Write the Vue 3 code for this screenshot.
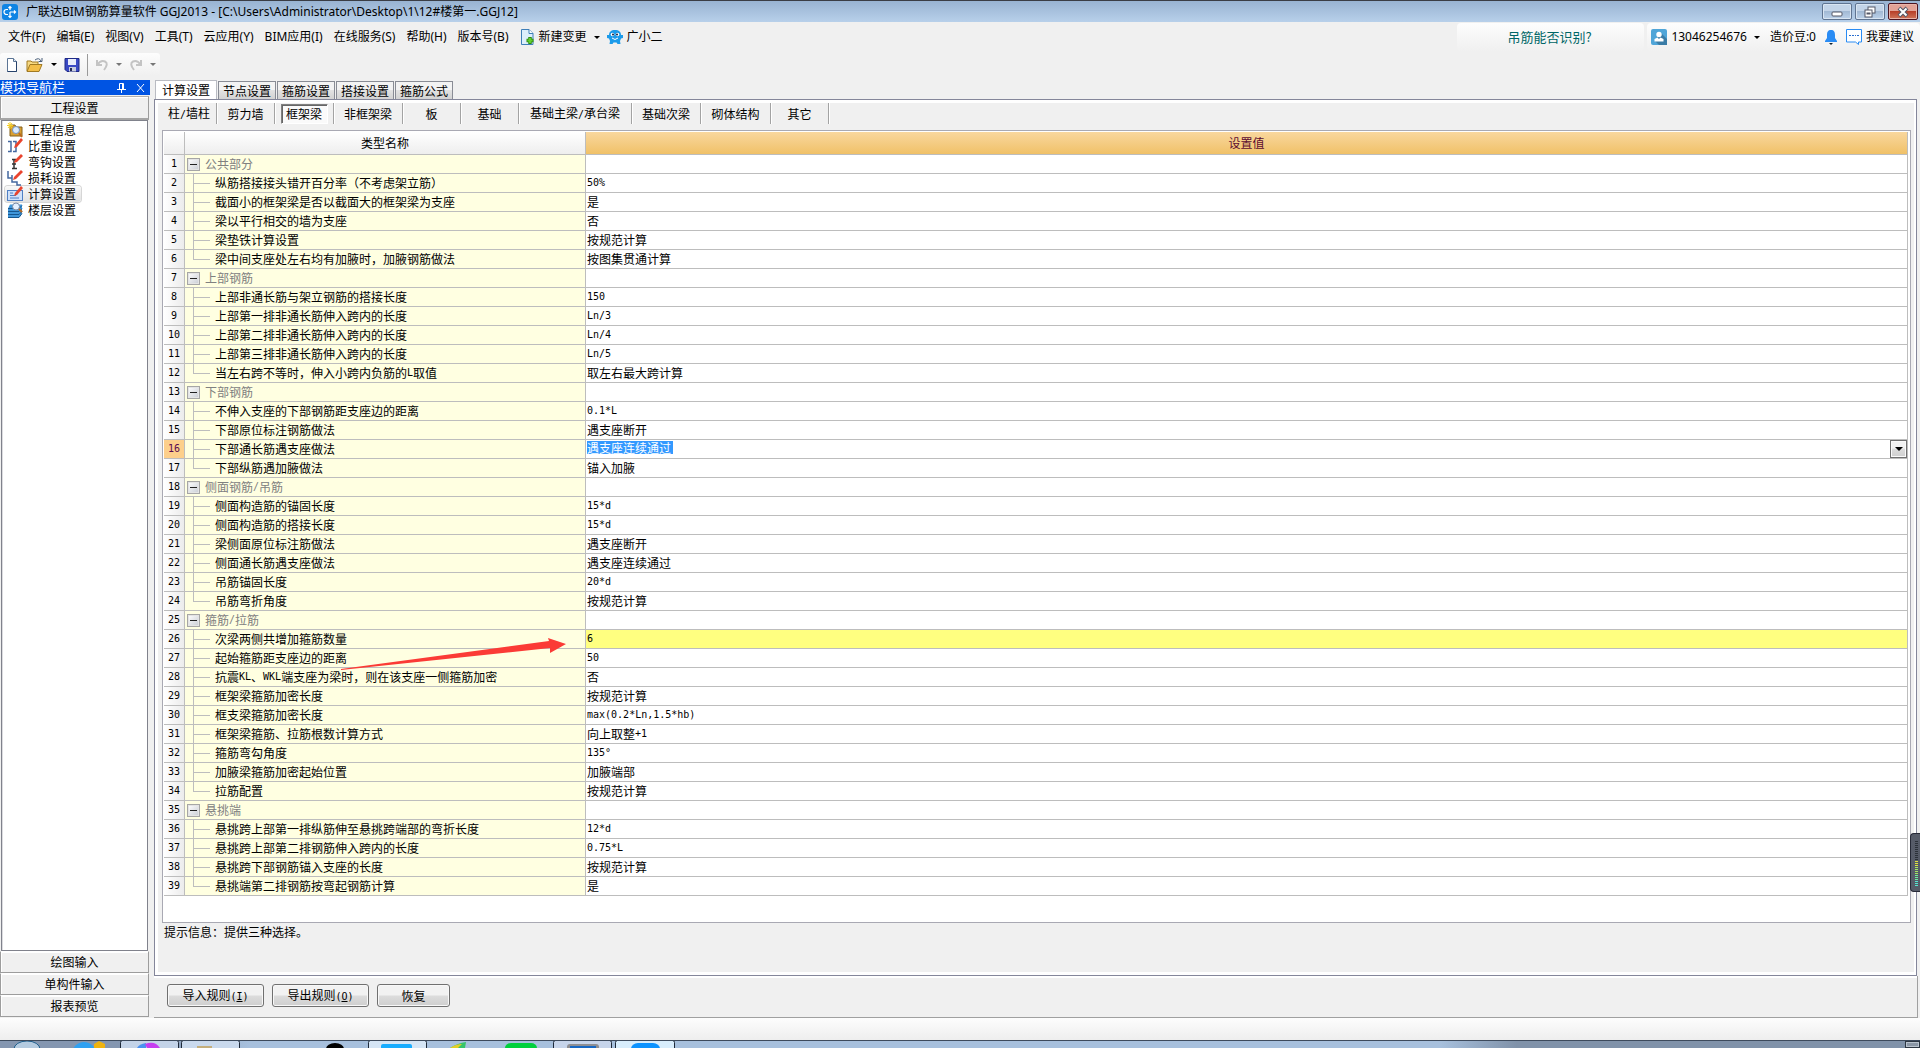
<script setup>
import { ref } from 'vue'

const menus = ['文件(F)', '编辑(E)', '视图(V)', '工具(T)', '云应用(Y)', 'BIM应用(I)', '在线服务(S)', '帮助(H)', '版本号(B)']
const navItems = ['工程信息', '比重设置', '弯钩设置', '损耗设置', '计算设置', '楼层设置']
const navBottom = ['绘图输入', '单构件输入', '报表预览']
const tabs = ['计算设置', '节点设置', '箍筋设置', '搭接设置', '箍筋公式']
const members = [
  { t: '柱/墙柱', w: 55 }, { t: '剪力墙', w: 58 }, { t: '框架梁', w: 59 }, { t: '非框架梁', w: 69 },
  { t: '板', w: 58 }, { t: '基础', w: 58 }, { t: '基础主梁/承台梁', w: 113 }, { t: '基础次梁', w: 69 },
  { t: '砌体结构', w: 70 }, { t: '其它', w: 58 },
]
const groups = [
  ['公共部分', [
    ['纵筋搭接接头错开百分率（不考虑架立筋）', '50%'],
    ['截面小的框架梁是否以截面大的框架梁为支座', '是'],
    ['梁以平行相交的墙为支座', '否'],
    ['梁垫铁计算设置', '按规范计算'],
    ['梁中间支座处左右均有加腋时，加腋钢筋做法', '按图集贯通计算'],
  ]],
  ['上部钢筋', [
    ['上部非通长筋与架立钢筋的搭接长度', '150'],
    ['上部第一排非通长筋伸入跨内的长度', 'Ln/3'],
    ['上部第二排非通长筋伸入跨内的长度', 'Ln/4'],
    ['上部第三排非通长筋伸入跨内的长度', 'Ln/5'],
    ['当左右跨不等时，伸入小跨内负筋的L取值', '取左右最大跨计算'],
  ]],
  ['下部钢筋', [
    ['不伸入支座的下部钢筋距支座边的距离', '0.1*L'],
    ['下部原位标注钢筋做法', '遇支座断开'],
    ['下部通长筋遇支座做法', '遇支座连续通过'],
    ['下部纵筋遇加腋做法', '锚入加腋'],
  ]],
  ['侧面钢筋/吊筋', [
    ['侧面构造筋的锚固长度', '15*d'],
    ['侧面构造筋的搭接长度', '15*d'],
    ['梁侧面原位标注筋做法', '遇支座断开'],
    ['侧面通长筋遇支座做法', '遇支座连续通过'],
    ['吊筋锚固长度', '20*d'],
    ['吊筋弯折角度', '按规范计算'],
  ]],
  ['箍筋/拉筋', [
    ['次梁两侧共增加箍筋数量', '6'],
    ['起始箍筋距支座边的距离', '50'],
    ['抗震KL、WKL端支座为梁时，则在该支座一侧箍筋加密', '否'],
    ['框架梁箍筋加密长度', '按规范计算'],
    ['框支梁箍筋加密长度', 'max(0.2*Ln,1.5*hb)'],
    ['框架梁箍筋、拉筋根数计算方式', '向上取整+1'],
    ['箍筋弯勾角度', '135°'],
    ['加腋梁箍筋加密起始位置', '加腋端部'],
    ['拉筋配置', '按规范计算'],
  ]],
  ['悬挑端', [
    ['悬挑跨上部第一排纵筋伸至悬挑跨端部的弯折长度', '12*d'],
    ['悬挑跨上部第二排钢筋伸入跨内的长度', '0.75*L'],
    ['悬挑跨下部钢筋锚入支座的长度', '按规范计算'],
    ['悬挑端第二排钢筋按弯起钢筋计算', '是'],
  ]],
]

// Latin runs are set in a half-width face, CJK runs keep the full-width one
const split = (s) => (s.match(/[\x20-\x7e°]+|[^\x20-\x7e°]+/g) || []).map((t) => ({ t, latin: /^[\x20-\x7e°]/.test(t) }))

const rows = []
groups.forEach(([title, items]) => {
  rows.push({ group: true, name: split(title), value: [] })
  items.forEach(([name, value], i) => {
    rows.push({ name: split(name), value: split(value), last: i === items.length - 1 })
  })
})
const current = ref(16)
const changed = 26
const editValue = ref('遇支座连续通过')
const meter = Array.from({ length: 23 }, (_, i) => i)
const meterColor = (i) => (i < 10 ? '#2b3038' : i < 13 ? '#dfe23c' : i < 17 ? '#a4e860' : i < 20 ? '#6fec9c' : '#55e6d0')
</script>

<template>
  <div class="app">
    <header class="titlebar">
      <svg class="logo" width="16" height="16" viewBox="0 0 16 16">
        <rect width="16" height="16" rx="3" fill="#0e84e4" />
        <path d="M8 6V2.500M6.500 4L8 2.500 9.500 4M8 8v5.500M6.500 12L8 13.500 9.500 12M8 8h5.500M12 6.500L13.500 8 12 9.500M6 5.500H4.500a2.200 2.200 0 0 0 0 5H6" fill="none" stroke="#fff" stroke-width="1.200" />
      </svg>
      <h1>广联达BIM钢筋算量软件 GGJ2013 - [C:\Users\Administrator\Desktop\1\12#楼第一.GGJ12]</h1>
      <div class="winbtns">
        <button aria-label="最小化">
          <svg width="14" height="12" viewBox="0 0 14 12"><rect x="2" y="6" width="10" height="4" rx="1" fill="#fff" stroke="#535766" /></svg>
        </button>
        <button aria-label="还原">
          <svg width="14" height="12" viewBox="0 0 14 12"><g fill="#fff" stroke="#535766"><rect x="5" y="1" width="7" height="6" /><rect x="2" y="4" width="7" height="7" /><rect x="4" y="7" width="3" height="1" /></g></svg>
        </button>
        <button class="close" aria-label="关闭">
          <svg width="14" height="12" viewBox="0 0 14 12"><path d="M3 2l8 8M11 2l-8 8" stroke="#535766" stroke-width="4" /><path d="M3.500 2.500l7 7M10.500 2.500l-7 7" stroke="#fff" stroke-width="2" /></svg>
        </button>
      </div>
    </header>

    <nav class="menubar">
      <button v-for="m in menus" :key="m">{{ m }}</button>
      <button class="withicon newchange">
        <svg width="15" height="16" viewBox="0 0 15 16">
          <path d="M1.500.5H9l4 4v11H1.500z" fill="#dceefb" stroke="#3f7fb8" /><path d="M9 .5v4h4" fill="#fff" stroke="#3f7fb8" />
          <path d="M10 8v7M6.500 11.500h7" stroke="#2c8d12" stroke-width="3.500" /><path d="M10 9v5M7.500 11.500h5" stroke="#63d02c" stroke-width="2" />
        </svg>
        新建变更
        <i class="caret"></i>
      </button>
      <button class="withicon helper">
        <svg width="16" height="16" viewBox="0 0 16 16">
          <path d="M8 1C4 1 2 3 2 6L0 6v3l2 .5L3 12l-.5 3h3l1-1.500h3l1 1.500h3L13 12l1-2.500 2-.5V6h-2c0-3-2-5-6-5z" fill="#1c9bea" />
          <circle cx="5.500" cy="5.500" r="1.800" fill="#fff" /><circle cx="10.500" cy="5.500" r="1.800" fill="#fff" /><circle cx="6" cy="5.500" r="1" fill="#124" /><circle cx="10" cy="5.500" r="1" fill="#124" />
          <path d="M5 9q3 3 6 0" fill="none" stroke="#fff" />
        </svg>
        广小二
      </button>
      <a class="tip" href="#">吊筋能否识别?</a>
      <div class="account">
        <button class="withicon user">
          <svg width="16" height="16" viewBox="0 0 16 16">
            <rect width="16" height="16" rx="2" fill="#4fa5d8" /><path d="M10 4l6 6v6H8l-4-4z" fill="#3a7ca6" />
            <circle cx="8" cy="5.500" r="2.700" fill="#fff" /><path d="M3.500 12.500v-2.500l3-1.500L8 10l1.500-1.500 3 1.500v2.500z" fill="#fff" />
          </svg>
          13046254676
          <i class="caret"></i>
        </button>
        <span>造价豆:0</span>
        <button class="bell" aria-label="消息">
          <svg width="12" height="16" viewBox="0 0 12 16"><path d="M6 1C3 1 2 3 2 6v3L0 12v1h12v-1l-2-3V6c0-3-1-5-4-5z" fill="#2a8cf4" /><path d="M4 14h4l-2 2z" fill="#123" /></svg>
        </button>
        <button class="withicon">
          <svg width="16" height="16" viewBox="0 0 16 16"><path d="M.5.5h15v12.500h-3v2.500l-3-2.500h-9z" fill="#fff" stroke="#2a8cf4" /><path d="M3 6.500h2M6 6.500h2M9 6.500h1M11 6.500h2" stroke="#2a6fd0" /></svg>
          我要建议
        </button>
      </div>
    </nav>

    <div class="toolbar">
      <div class="tools">
        <button aria-label="新建">
          <svg width="14" height="16" viewBox="0 0 14 16"><path d="M2.500 1.500h6l3 3v10h-9z" fill="#fff" stroke="#5b7494" /><path d="M8.500 1.500v3h3" fill="#dbe6f3" stroke="#5b7494" /><path d="M11.500 4.500v10h-9" fill="none" stroke="#26426b" /></svg>
        </button>
        <button aria-label="打开">
          <svg width="18" height="16" viewBox="0 0 18 16"><path d="M1 14V4h4l1 1h6v3" fill="#f6d983" stroke="#a17a22" /><path d="M1 14.500l3-7h12l-3 7z" fill="#f3bf4a" stroke="#a17a22" /><path d="M9 3q4-3 6 1M16 1v3.500h-3.500" fill="none" stroke="#4a5f7a" /></svg>
        </button>
        <i class="caret"></i>
        <button aria-label="保存">
          <svg width="16" height="16" viewBox="0 0 16 16"><path d="M1 1.500h14v13H3l-2-2z" fill="#3a49c4" stroke="#1f2a86" /><rect x="4" y="2" width="8" height="6" fill="#e9edfb" /><rect x="5" y="10" width="7" height="4.500" fill="#c9cede" /><rect x="6" y="11" width="2" height="3" fill="#222a55" /></svg>
        </button>
        <span class="vline"></span>
        <button aria-label="撤销" disabled>
          <svg width="14" height="16" viewBox="0 0 14 16"><path d="M2 3v5h5M2.500 7.500Q6 2.500 10 4.500T9 13" fill="none" stroke="#c4c4c4" stroke-width="2" /></svg>
        </button>
        <i class="caret dim"></i>
        <button aria-label="重做" disabled>
          <svg width="14" height="16" viewBox="0 0 14 16"><path d="M12 3v5H7M11.500 7.500Q8 2.500 4 4.500T5 13" fill="none" stroke="#c4c4c4" stroke-width="2" /></svg>
        </button>
        <i class="caret dim"></i>
      </div>
    </div>

    <div class="work">
      <aside class="side">
        <div class="sidetitle">
          <span>模块导航栏</span>
          <button aria-label="固定"><svg width="9" height="10" viewBox="0 0 9 10"><path d="M2.500 6V.5h4V6M0 6.500h9M4.500 6v4M5.500 1v5" fill="none" stroke="#fff" /></svg></button>
          <button aria-label="关闭面板"><svg width="9" height="10" viewBox="0 0 9 10"><path d="M1 1l7 8M8 1l-7 8" stroke="#fff" /></svg></button>
        </div>
        <button class="bar top">工程设置</button>
        <ul class="navlist">
          <li v-for="(n, i) in navItems" :key="n" :class="{ sel: i === 4 }">
            <a href="#">
              <svg width="16" height="16" viewBox="0 0 16 16">
                <template v-if="i === 0">
                  <path d="M3 3h5l1 2h6v9H3z" fill="#d99f32" stroke="#85601a" /><path d="M3 0v7M0 3.500h6M1 1l4 5M5 1L1 6" stroke="#f6cf27" />
                  <circle cx="9" cy="8" r="3.500" fill="#dcecff" stroke="#7391bd" /><path d="M12 11l3 4" stroke="#b86a20" stroke-width="2" />
                </template>
                <template v-else-if="i === 1">
                  <path d="M1 3.500h3v10H1M6 3.500h3v10H6" fill="none" stroke="#4468a0" stroke-width="1.500" /><path d="M7 10l1-3 6-7 2 2-6 7z" fill="#e9442e" />
                </template>
                <template v-else-if="i === 2">
                  <path d="M5 5.500h4M7 5.500v9M5 14.500h5M5 10h4" fill="none" stroke="#333" stroke-width="1.500" /><path d="M7 9l1-3 6-6 2 2-6 6z" fill="#e9442e" />
                </template>
                <template v-else-if="i === 3">
                  <path d="M1 1v7h4v2M5 5v7h5v3h4" fill="none" stroke="#4468a0" stroke-width="1.500" /><path d="M6 10l1-3 7-7 2 2-7 7z" fill="#e9442e" />
                </template>
                <template v-else-if="i === 4">
                  <rect x=".5" y="4.500" width="15" height="10" fill="#cfe1fa" stroke="#4f7fc4" /><path d="M3 7h3M3 9.500h6M3 12h9" stroke="#4f7fc4" /><path d="M7 10l1-3 6-7 2 2-6 7z" fill="#e9442e" />
                </template>
                <template v-else>
                  <path d="M3 2.500h12v9l-3 4H1v-9z" fill="#3f96da" /><path d="M1 6.500h11l3-3M1 9.500h11l3-3M1 12.500h11l3-3M1 15.500h11l3-4" fill="none" stroke="#15568f" />
                  <circle cx="9" cy="4.500" r="3.500" fill="#e4f0ff" stroke="#7a8ba6" /><path d="M12 7l3 3" stroke="#b86a20" stroke-width="2" />
                </template>
              </svg>
              <span>{{ n }}</span>
            </a>
          </li>
        </ul>
        <button v-for="b in navBottom" :key="b" class="bar">{{ b }}</button>
      </aside>

      <main class="main">
        <div class="tabs" role="tablist">
          <button v-for="(t, i) in tabs" :key="t" role="tab" :class="{ on: i === 0 }">{{ t }}</button>
        </div>
        <section class="page">
          <div class="pagein">
            <div class="members">
              <div v-for="(m, i) in members" :key="m.t" class="member" :style="{ width: m.w + 'px' }">
                <button :class="{ on: i === 2 }"><span v-for="(p, k) in split(m.t)" :key="k" :class="{ latin: p.latin }">{{ p.t }}</span></button>
              </div>
            </div>
            <div class="grid">
              <table>
                <colgroup><col class="cnum" /><col class="cname" /><col /></colgroup>
                <thead><tr><th></th><th>类型名称</th><th class="hot">设置值</th></tr></thead>
                <tbody>
                  <tr v-for="(r, i) in rows" :key="i" :class="{ group: r.group, changed: i + 1 === changed, current: i + 1 === current }">
                    <th scope="row"><span class="latin">{{ i + 1 }}</span></th>
                    <td class="name">
                      <div class="cell">
                        <button v-if="r.group" class="expander" aria-label="折叠"></button>
                        <svg v-else width="30" height="18" viewBox="0 0 30 18"><path :d="(r.last ? 'M8.500 0V9.500' : 'M8.500 0V18') + 'M8 9.500H25'" fill="none" stroke="#bdbdbd" /></svg>
                        <span v-for="(p, k) in r.name" :key="k" :class="{ latin: p.latin }">{{ p.t }}</span>
                      </div>
                    </td>
                    <td class="value">
                      <div v-if="i + 1 === current" class="combo">
                        <input v-model="editValue" type="text" aria-label="下部通长筋遇支座做法" />
                        <button aria-label="展开"><i class="caret"></i></button>
                      </div>
                      <div v-else class="cell"><span v-for="(p, k) in r.value" :key="k" :class="{ latin: p.latin }">{{ p.t }}</span></div>
                    </td>
                  </tr>
                </tbody>
              </table>
              <svg class="arrow" width="226" height="34" viewBox="0 0 226 34">
                <path d="M0 32L208 4L207 1L225 7L209 16V11L0 33z" fill="#fb3b36" />
              </svg>
            </div>
            <p class="hint">提示信息：提供三种选择。</p>
          </div>
        </section>
        <footer class="actions">
          <button class="wide">导入规则<span class="latin">(<u>I</u>)</span></button>
          <button class="wide">导出规则<span class="latin">(<u>O</u>)</span></button>
          <button>恢复</button>
        </footer>
      </main>
    </div>

    <div class="status"></div>

    <div class="taskbar">
      <svg width="680" height="8" viewBox="0 0 680 8">
        <ellipse cx="27" cy="9" rx="13" ry="8" fill="#b4cbe0" stroke="#21618e" />
        <circle cx="84" cy="14" r="12" fill="#2fa1f2" /><path d="M94 8V4l5-3 6 3v4z" fill="#efb30f" />
        <g stroke="#1e2a3a"><rect x="120.500" y=".5" width="58" height="12" rx="2" fill="#c3d3e8" /><rect x="181.500" y=".5" width="58" height="12" rx="2" fill="#c9d9ed" /><rect x="368.500" y=".5" width="58" height="12" rx="2" fill="#d5e5f5" /><rect x="553.500" y=".5" width="58" height="12" rx="2" fill="#c6d4ea" /><rect x="615.500" y=".5" width="59" height="12" rx="2" fill="#d8edfc" /></g>
        <path d="M137 8q2-4 9-5v5z" fill="#4b92f0" /><path d="M145 4q10-4 15 4h-13z" fill="#c63df0" />
        <rect x="197" y="6" width="15" height="2" fill="#c4ae7c" /><ellipse cx="335" cy="9" rx="9" ry="6" fill="#000" />
        <rect x="381" y="4" width="31" height="6" rx="2" fill="#18adff" /><path d="M450 8q8-5 16-6l-1 6z" fill="#36c469" /><path d="M450 8q6-4 12-4l-4 4z" fill="#e5cf25" />
        <rect x="505" y="3" width="32" height="10" rx="6" fill="#00d03c" /><rect x="567" y="4" width="32" height="8" rx="3" fill="#8e8e92" /><rect x="570" y="6" width="26" height="4" fill="#1768c4" /><rect x="631" y="3" width="29" height="12" rx="7" fill="#0c93ff" />
      </svg>
      <span class="desk"></span>
    </div>

    <div class="meter"><i v-for="m in meter" :key="m" :style="{ background: meterColor(m) }"></i></div>
  </div>
</template>

<style>
body { margin: 0; background: #f0f0f0; }
</style>

<style scoped>
.app { --sim: "Noto Sans CJK SC", sans-serif; min-height: 100vh; display: flex; flex-direction: column; font: 12px/18px var(--sim); color: #000; background: #f0f0f0; position: relative; overflow: hidden; }
* { box-sizing: border-box; }
button { font: inherit; color: inherit; border: 0; padding: 0; background: none; white-space: nowrap; }
svg { flex: none; display: block; }
a { color: inherit; text-decoration: none; }
.latin { font-family: "DejaVu Sans Mono", monospace; font-size: 10px; }
.caret { flex: none; border: 3px solid transparent; border-top-color: #000; border-bottom: 0; width: 0; height: 0; }
.caret.dim { border-top-color: #777; }

.titlebar { display: flex; align-items: center; height: 22px; padding: 0 2px; background: linear-gradient(#98b3d2, #b8d0ea); border-top: 1px solid #3a3d45; }
.titlebar h1 { flex: 1; margin: 0 0 0 8px; font: 12px/20px "Noto Sans", "Noto Sans CJK SC", sans-serif; white-space: nowrap; }
.winbtns { display: flex; gap: 3px; }
.winbtns button { width: 30px; height: 17px; display: flex; align-items: center; justify-content: center; border: 1px solid #5f7491; border-radius: 2px; background: linear-gradient(#c3d4e8 45%, #a2b9d4 50%, #bcd2ea); box-shadow: inset 0 0 0 1px #d9e5f2; }
.winbtns .close { border-color: #4c1420; background: linear-gradient(#e2a397 45%, #b8402a 50%, #d0755a); box-shadow: inset 0 0 0 1px #e9b5aa; }

.menubar { display: flex; align-items: center; height: 30px; padding-left: 8px; gap: 11px; font-family: "Noto Sans", "Noto Sans CJK SC", sans-serif; }
.withicon { display: flex; align-items: center; gap: 4px; }
.newchange .caret { margin-left: 3px; }
.helper { margin-left: -4px; }
.tip { margin-left: auto; width: 187px; height: 28px; line-height: 28px; padding-left: 50px; color: #006666; font-family: var(--sim); font-size: 13px; background: linear-gradient(#fdfdfd, #f0f0f0); border-radius: 4px; }
.account { display: flex; align-items: center; height: 28px; margin-left: -8px; padding: 0 6px 0 4px; background: linear-gradient(#fdfdfd, #f0f0f0); gap: 9px; border-radius: 4px; }
.user .caret { margin: 0 1px 0 3px; }

.toolbar { height: 28px; display: flex; padding-top: 1px; }
.tools { display: flex; align-items: center; height: 23px; padding: 0 4px 0 5px; gap: 7px; background: linear-gradient(#fdfdfd, #f0f0f0); border-radius: 3px; }
.vline { width: 1px; height: 22px; background: #9a9a9a; }

.work { flex: 1; display: flex; gap: 4px; }
.side { flex: none; width: 150px; display: flex; flex-direction: column; padding-bottom: 1px; }
.sidetitle { display: flex; align-items: center; gap: 10px; height: 15px; margin-bottom: 1px; padding-right: 5px; background: #0054e3; color: #fff; }
.sidetitle span { flex: 1; line-height: 14px; height: 15px; font-size: 13px; }
.bar { height: 22px; margin-right: 1px; line-height: 20px; border: 1px solid #9d9d9d; border-top-color: #fff; box-shadow: inset 1px 1px #fff; }
.bar.top { height: 24px; border-top-color: #b0b0b0; border-bottom: 2px solid #a5a5a5; }
.navlist { flex: 1; margin: 0 2px 0 1px; padding: 1px 3px; list-style: none; background: #fff; border: 1px solid #80828c; box-shadow: inset 1px 0 #dcdce0; }
.navlist a { display: flex; align-items: center; gap: 5px; width: 76px; height: 16px; padding: 0 2px; line-height: 14px; white-space: nowrap; }
.navlist .sel a { background: linear-gradient(#f8f8f8, #e2e2e2); box-shadow: 0 0 0 1px #d6d6d6; border-radius: 3px; }

.main { flex: 1; min-width: 0; display: flex; flex-direction: column; padding-right: 2px; }
.tabs { display: flex; align-items: flex-end; gap: 1px; height: 19px; padding-left: 1px; }
.tabs button { height: 18px; width: 58px; line-height: 16px; border: 1px solid #898c95; border-bottom: 0; background: linear-gradient(#f3f3f3 45%, #e2e2e2 50%, #d2d2d2); }
.tabs .on { width: 62px; height: 19px; background: #fff; border-color: #b9bbc2; }
.page { flex: 1; display: flex; margin-right: 1px; border: 1px solid #84869a; background: #fff; padding: 3px 2px 3px 3px; }
.pagein { flex: 1; min-width: 0; display: flex; flex-direction: column; background: #f0f0f0; padding: 0 3px 0 4px; }
.members { display: flex; height: 27px; align-items: flex-start; }
.member { height: 21px; display: flex; align-items: center; justify-content: center; border-right: 1px solid #a3a3a3; box-shadow: 1px 0 #fff; }
.member button { line-height: 18px; height: 20px; }
.member .on { width: 47px; border: 1px solid #808080; border-right-color: #fff; border-bottom-color: #fff; background: #fafafa; box-shadow: inset 1px 1px #666; }
.grid { flex: 1; position: relative; background: #fff; border: 1px solid #a9a9b3; padding: 1px 2px 26px 1px; }
table { width: 100%; table-layout: fixed; border-collapse: separate; border-spacing: 0; }
.cnum { width: 21px; }
.cname { width: 401px; }
th, td { height: 19px; padding: 0; font-weight: normal; line-height: 18px; border: solid #bdbdbd; border-width: 0 1px 1px 0; white-space: nowrap; }
thead th { height: 23px; background: linear-gradient(#fff, #eee); }
thead .hot { background: linear-gradient(#f9d79e, #f0c168); color: #5c0a30; }
tbody th { background: linear-gradient(90deg, #fff, #ececec); }
tbody th span { display: block; height: 18px; line-height: 18px; text-align: center; }
.name { background: #ffffe1; }
.cell { display: flex; align-items: center; height: 18px; }
.group .cell { color: #808080; }
.expander { width: 13px; height: 13px; margin: 0 5px 0 2px; border: 1px solid #a6a6a6; background: linear-gradient(#222, #222) center / 7px 1px no-repeat, linear-gradient(135deg, #fff, #c8ccd4); box-shadow: inset 0 0 0 1px #e4e4e4; }
.value { padding-left: 1px; vertical-align: top; }
.changed .value { background: #ffff80; }
.current th { background: #fdcf8b; color: #5a0a50; }
.combo { display: flex; align-items: center; justify-content: space-between; height: 18px; }
.combo input { width: 86px; height: 13px; margin-bottom: 3px; padding: 0; border: 0; font: 12px/13px var(--sim); color: #fff; background: #3399ff; }
.combo button { width: 17px; height: 18px; display: flex; align-items: center; justify-content: center; border: 1px solid #707070; background: linear-gradient(#f2f2f2 45%, #dcdcdc 50%, #cfcfcf); box-shadow: inset 0 0 0 1px #fafafa; }
.combo .caret { border-width: 4px 4px 0; }
.arrow { position: absolute; left: 178px; top: 506px; }
.hint { height: 49px; margin: 0; padding: 0 0 0 2px; }
.actions { display: flex; gap: 8px; height: 42px; padding: 8px 13px; border: 1px solid #a0a0a0; border-width: 0 1px 1px 0; box-shadow: inset 0 2px #fff; }
.actions button { width: 73px; height: 23px; line-height: 20px; border: 1px solid #707070; border-radius: 3px; background: linear-gradient(#f2f2f2 48%, #dcdcdc 52%, #cfcfcf); box-shadow: inset 0 0 0 1px #f8f8f8; }
.actions .wide { width: 97px; }

.status { height: 22px; background: linear-gradient(#fdfdfd, #eee); }
.taskbar { display: flex; justify-content: space-between; height: 8px; overflow: hidden; border-top: 1px solid #3d4a5c; background: linear-gradient(90deg, #8496b0 0, #8496b0 7%, #a7c0dd 13%, #a7c0dd 75%, #8092a9 79%); }
.taskbar svg { margin-top: -1px; }
.desk { width: 15px; border: 1px solid #2c3642; background: #8b97a6; box-shadow: inset 0 0 0 1px #b9c3ce; }
.meter { position: absolute; right: 0; top: 833px; width: 10px; height: 59px; padding: 7px 2px 0 4px; display: flex; flex-direction: column; gap: 1px; background: #565b68; border: 1px solid #262936; border-right: 0; border-radius: 4px 0 0 4px; }
.meter i { height: 1px; flex: none; }
</style>
